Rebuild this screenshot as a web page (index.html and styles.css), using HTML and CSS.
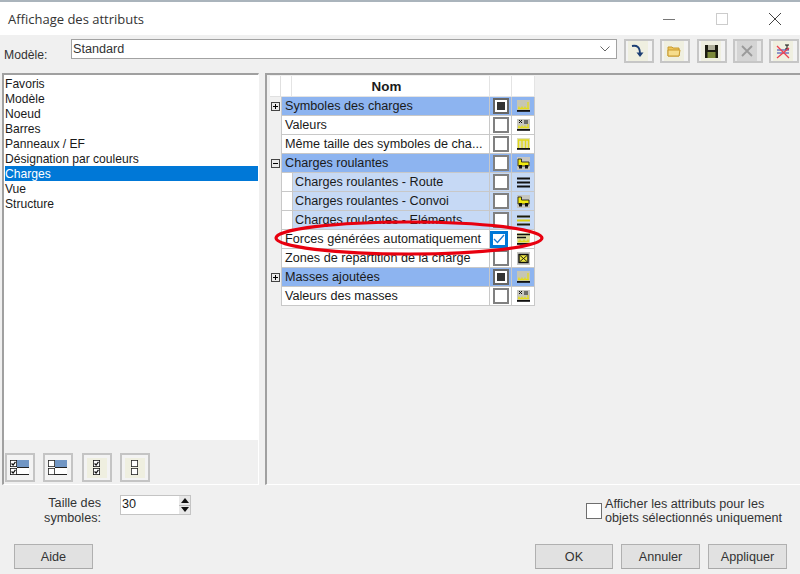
FILE: index.html
```html
<!DOCTYPE html>
<html lang="fr">
<head>
<meta charset="utf-8">
<title>Affichage des attributs</title>
<link rel="stylesheet" href="styles.css">
</head>
<body>
<svg class="defs" width="0" height="0" aria-hidden="true">
  <symbol id="i-load" viewBox="0 0 13 13"><rect width="13" height="11" fill="#c6c6b4"/><path d="M1 8.500h11M2 8.500V6.500M5 8.500V6.500M8 8.500V6.500M11 8.500V2" stroke="#e4dc1c" stroke-width="1.300" fill="none"/><rect x="0" y="10" width="13" height="1.800" fill="#111"/></symbol>
  <symbol id="i-val" viewBox="0 0 13 13"><rect width="13" height="11" fill="#c6c6c0"/><path d="M2 1l3 3M5 1L2 4M7 2h4M7 4h4" stroke="#111" stroke-width="1" fill="none"/><path d="M1 8.500h11M2 8.500V6.500M5 8.500V6.500M8 8.500V6.500M11 8.500V5" stroke="#e4dc1c" stroke-width="1.300" fill="none"/><rect x="0" y="10" width="13" height="1.800" fill="#111"/></symbol>
  <symbol id="i-same" viewBox="0 0 13 13"><rect width="13" height="11" fill="#e0e0b8"/><path d="M1.500 10V2h10v8M5 2v8M8.500 2v8" stroke="#e0d81a" stroke-width="1.300" fill="none"/><rect x="0" y="10" width="13" height="1.800" fill="#111"/></symbol>
  <symbol id="i-truck" viewBox="0 0 13 13"><rect width="13" height="13" fill="#c6c6c0"/><path d="M1 2h3.500v3H12v4H1z" fill="#f1ea10" stroke="#111" stroke-width=".8"/><rect x="2" y="8" width="3" height="3.500" fill="#111"/><rect x="8" y="8" width="3" height="3.500" fill="#111"/></symbol>
  <symbol id="i-lines" viewBox="0 0 13 13"><path d="M0 2.500h13M0 6.500h13M0 10.500h13" stroke="#111" stroke-width="1.800"/></symbol>
  <symbol id="i-lines-y" viewBox="0 0 13 13"><path d="M0 2.500h13M0 10.500h13" stroke="#1c1c08" stroke-width="1.800"/><path d="M0 6.500h13" stroke="#d8cf10" stroke-width="2"/></symbol>
  <symbol id="i-forces" viewBox="0 0 13 13"><rect width="13" height="11" fill="#dcdca0"/><path d="M0 1.500h13M0 4.500h9" stroke="#111" stroke-width="1.300"/><path d="M1 8.500h11M3 8.500V6.500M7 8.500V6.500M11 8.500V6.500" stroke="#e0d81a" stroke-width="1.300" fill="none"/><rect x="0" y="10" width="13" height="1.800" fill="#111"/></symbol>
  <symbol id="i-zone" viewBox="0 0 13 13"><rect width="13" height="13" fill="#c6c6c0"/><rect x="2" y="2.500" width="9" height="8" fill="#eee642" stroke="#111" stroke-width="1.400"/><path d="M3 3.500l7 6M10 3.500l-7 6" stroke="#111" stroke-width=".9"/></symbol>
  <symbol id="c-on" viewBox="0 0 9 9"><rect x=".5" y=".5" width="8" height="8" fill="#fff" stroke="#111"/><path d="M2 4.500l2 2 3-4" stroke="#111" stroke-width="1.600" fill="none"/></symbol>
  <symbol id="c-off" viewBox="0 0 9 9"><rect x=".5" y=".5" width="8" height="8" fill="#fff" stroke="#222"/></symbol>
</svg>

<div class="dialog">
  <div class="top-strip"></div>
  <header class="titlebar">
    <span class="title">Affichage des attributs</span>
    <div class="win-controls">
      <svg class="win-btn" width="12" height="12" viewBox="0 0 12 12"><path d="M0 6.500h12" stroke="#777" stroke-width="1"/></svg>
      <svg class="win-btn" width="12" height="12" viewBox="0 0 12 12"><rect x=".5" y=".5" width="11" height="11" fill="#fff" stroke="#ccc"/></svg>
      <svg class="win-btn" width="12" height="12" viewBox="0 0 12 12"><path d="M0 0l12 12M12 0L0 12" stroke="#444" stroke-width="1"/></svg>
    </div>
  </header>

  <div class="model-row">
    <label class="model-label">Modèle:</label>
    <div class="combo">
      <span>Standard</span>
      <svg width="10" height="6" viewBox="0 0 10 6"><path d="M.5.500L5 5 9.500.500" stroke="#666" fill="none"/></svg>
    </div>
    <div class="tools">
      <button class="tool"><span class="tool-face"><svg width="14" height="14" viewBox="0 0 14 14"><path d="M1 2c5-1 8 1 8 8" stroke="#1d3f74" stroke-width="1.800" fill="none"/><path d="M5.500 8.500h7L9 13z" fill="#1d3f74"/></svg></span></button>
      <button class="tool"><span class="tool-face"><svg width="14" height="12" viewBox="0 0 14 12"><path d="M1 2h4l1 1h6v8H1z" fill="#eec65a" stroke="#c99a2c"/><path d="M1 5h12l-1 6H1z" fill="#f6dd8c" stroke="#c99a2c"/></svg></span></button>
      <button class="tool"><span class="tool-face"><svg width="13" height="13" viewBox="0 0 13 13"><rect width="13" height="13" fill="#1c1c10"/><rect x="3" y="0" width="7" height="5" fill="#b0b09a"/><rect x="2.500" y="7" width="8" height="6" fill="#7d8a3a"/></svg></span></button>
      <button class="tool tool-off"><span class="tool-face"><svg width="12" height="12" viewBox="0 0 12 12"><path d="M1 1l10 10M11 1L1 11" stroke="#9a9a9a" stroke-width="1.800"/></svg></span></button>
      <button class="tool"><span class="tool-face"><svg width="15" height="15" viewBox="0 0 15 15"><path d="M9 1h4M11 1v4M9 5h4" stroke="#111" fill="none"/><path d="M1 6h12M1 9h12" stroke="#2c3fb0"/><path d="M1 2l12 12M1 14L13 4" stroke="#ee4050" stroke-width="1.300"/></svg></span></button>
    </div>
  </div>

  <main class="panels">
    <section class="left-panel">
      <ul class="list">
        <li>Favoris</li>
        <li>Modèle</li>
        <li>Noeud</li>
        <li>Barres</li>
        <li>Panneaux / EF</li>
        <li>Désignation par couleurs</li>
        <li class="selected">Charges</li>
        <li>Vue</li>
        <li>Structure</li>
      </ul>
      <div class="list-tools">
        <button class="mini"><svg width="20" height="15" viewBox="0 0 20 15"><use href="#c-on" width="7" height="7" x="0" y="0"/><use href="#c-on" width="7" height="7" x="0" y="8"/><rect x="7" y="0" width="12" height="7" fill="#7196c4"/><rect x="7" y="8" width="12" height="6" fill="#fff"/><path d="M7 7.500h12M7 14.500h12" stroke="#222"/></svg></button>
        <button class="mini"><svg width="20" height="15" viewBox="0 0 20 15"><use href="#c-off" width="7" height="7" x="0" y="0"/><use href="#c-off" width="7" height="7" x="0" y="8"/><rect x="7" y="0" width="12" height="7" fill="#7196c4"/><rect x="7" y="8" width="12" height="6" fill="#fff"/><path d="M7 7.500h12M7 14.500h12" stroke="#222"/></svg></button>
        <button class="mini mini-cream"><svg width="8" height="16" viewBox="0 0 8 16"><use href="#c-on" width="7" height="7" x="0" y="0"/><use href="#c-on" width="7" height="7" x="0" y="8"/></svg></button>
        <button class="mini mini-cream"><svg width="8" height="16" viewBox="0 0 8 16"><use href="#c-off" width="7" height="7" x="0" y="0"/><use href="#c-off" width="7" height="7" x="0" y="8"/></svg></button>
      </div>
    </section>

    <section class="right-panel">
      <div class="tree">
        <div class="row head"><div class="exp"></div><div class="cell name">Nom</div><div class="cell chk"></div><div class="cell ico"></div></div>

        <div class="row group"><div class="exp"><span class="pm plus"></span></div><div class="cell name">Symboles des charges</div><div class="cell chk"><span class="box mixed"></span></div><div class="cell ico"><svg width="13" height="13"><use href="#i-load"/></svg></div></div>
        <div class="row"><div class="exp"></div><div class="cell name">Valeurs</div><div class="cell chk"><span class="box"></span></div><div class="cell ico"><svg width="13" height="13"><use href="#i-val"/></svg></div></div>
        <div class="row"><div class="exp"></div><div class="cell name">Même taille des symboles de cha...</div><div class="cell chk"><span class="box"></span></div><div class="cell ico"><svg width="13" height="13"><use href="#i-same"/></svg></div></div>
        <div class="row group"><div class="exp"><span class="pm"></span></div><div class="cell name">Charges roulantes</div><div class="cell chk"><span class="box"></span></div><div class="cell ico"><svg width="13" height="13"><use href="#i-truck"/></svg></div></div>
        <div class="row sub"><div class="exp"></div><div class="cell name">Charges roulantes - Route</div><div class="cell chk"><span class="box"></span></div><div class="cell ico"><svg width="13" height="13"><use href="#i-lines"/></svg></div></div>
        <div class="row sub"><div class="exp"></div><div class="cell name">Charges roulantes - Convoi</div><div class="cell chk"><span class="box"></span></div><div class="cell ico"><svg width="13" height="13"><use href="#i-truck"/></svg></div></div>
        <div class="row sub"><div class="exp"></div><div class="cell name">Charges roulantes - Eléments</div><div class="cell chk"><span class="box"></span></div><div class="cell ico"><svg width="13" height="13"><use href="#i-lines-y"/></svg></div></div>
        <div class="row"><div class="exp"></div><div class="cell name">Forces générées automatiquement</div><div class="cell chk"><span class="box checked"><svg width="12" height="10" viewBox="0 0 12 10"><path d="M1 5l3.500 3.500L11 1" stroke="#1d78d0" stroke-width="1.300" fill="none"/></svg></span></div><div class="cell ico"><svg width="13" height="13"><use href="#i-forces"/></svg></div></div>
        <div class="row"><div class="exp"></div><div class="cell name">Zones de répartition de la charge</div><div class="cell chk"><span class="box"></span></div><div class="cell ico"><svg width="13" height="13"><use href="#i-zone"/></svg></div></div>
        <div class="row group"><div class="exp"><span class="pm plus"></span></div><div class="cell name">Masses ajoutées</div><div class="cell chk"><span class="box mixed"></span></div><div class="cell ico"><svg width="13" height="13"><use href="#i-load"/></svg></div></div>
        <div class="row"><div class="exp"></div><div class="cell name">Valeurs des masses</div><div class="cell chk"><span class="box"></span></div><div class="cell ico"><svg width="13" height="13"><use href="#i-val"/></svg></div></div>
      </div>
      <svg class="highlight" width="280" height="44" viewBox="0 0 280 44"><ellipse cx="139" cy="22" rx="133" ry="16" fill="none" stroke="#e8000f" stroke-width="3.200"/></svg>
    </section>
  </main>

  <div class="options">
    <div class="size-label">Taille des<br>symboles:</div>
    <div class="spinner">
      <span class="spin-value">30</span>
      <span class="spin-btns">
        <span class="spin-btn"><svg width="8" height="5" viewBox="0 0 8 5"><path d="M0 5h8L4 0z" fill="#111"/></svg></span>
        <span class="spin-btn"><svg width="8" height="5" viewBox="0 0 8 5"><path d="M0 0h8L4 5z" fill="#111"/></svg></span>
      </span>
    </div>
    <div class="selection-only">
      <span class="box plain"></span>
      <span class="selection-text">Afficher les attributs pour les<br>objets sélectionnés uniquement</span>
    </div>
  </div>

  <footer class="actions">
    <button class="btn">Aide</button>
    <div class="actions-right">
      <button class="btn">OK</button>
      <button class="btn">Annuler</button>
      <button class="btn">Appliquer</button>
    </div>
  </footer>
</div>
</body>
</html>
```

FILE: styles.css
```css
* { box-sizing: border-box; }
html, body { margin: 0; padding: 0; }
body {
  width: 800px;
  height: 574px;
  overflow: hidden;
  background: #f0f0f0;
  font-family: "Liberation Sans", Arial, sans-serif;
  font-size: 12.650px;
  color: #1a1a1a;
}
.defs { position: absolute; }
.dialog { display: flex; flex-direction: column; width: 800px; height: 574px; }
.top-strip { height: 2px; background: #aab4bc; }
.titlebar {
  height: 33px;
  background: #fff;
  display: flex;
  align-items: center;
  justify-content: space-between;
  padding-left: 8px;
}
.title { font-family: "Open Sans", sans-serif; font-size: 13px; color: #333; }
.win-controls { display: flex; gap: 41px; padding-right: 19px; align-items: center; }
.win-btn { display: block; }

.model-row { height: 38px; display: flex; align-items: flex-start; padding: 4px 0 0 4px; }
.model-label { width: 67px; padding-top: 9px; color: #333; font-size: 12.200px; }
.combo {
  width: 546px;
  height: 20px;
  background: #fff;
  border: 1px solid #a2a2a2;
  display: flex;
  align-items: center;
  justify-content: space-between;
  padding: 0 6px 1px 1px;
}
.combo span { color: #333; }
.combo svg { margin-top: 1px; }
.tools { display: flex; gap: 6px; margin-left: 7px; }
.tools .tool:nth-child(3) { margin-left: 1px; }
.tool {
  width: 30px;
  height: 24px;
  border: 2px solid #c6c6c6;
  background: #f3f3f3;
  padding: 0;
  display: flex;
}
.tool-face { width: 20px; height: 20px; margin-left: 2px; background: #efefe0; display: flex; align-items: center; justify-content: center; }
.tool-off { background: #e8e8e8; }
.tool-off .tool-face { background: #d4d4d4; }

.panels { height: 412px; display: flex; padding-left: 2px; }
.left-panel {
  width: 257px;
  border: 1px solid #fff;
  border-color: #a0a0a0 #fff #fff #a0a0a0;
  border-width: 2px 1px 1px 2px;
  display: flex;
  flex-direction: column;
}
.list { list-style: none; margin: 0; padding: 1px 0 0 1px; height: 365px; background: #fff; line-height: 17px; font-size: 12.100px; }
.list li { height: 15px; white-space: nowrap; }
.list .selected { background: #0078d7; color: #fff; line-height: 15px; padding-top: 1px; }
.list-tools { display: flex; gap: 8px; padding: 13px 0 0 1px; }
.mini {
  width: 30px;
  height: 29px;
  border: 2px solid #c4c4c4;
  background: #f3f3f3;
  padding: 0;
  display: flex;
  align-items: center;
  justify-content: center;
}
.list-tools .mini:nth-child(3) { margin-left: 1px; }
.mini-cream svg { background: #efefe0; box-sizing: content-box; padding: 2px 6px 2px 6px; }

.right-panel {
  position: relative;
  margin-left: 6px;
  width: 535px;
  border-left: 2px solid #a0a0a0;
  border-top: 2px solid #a0a0a0;
  border-bottom: 1px solid #fff;
  padding: 1px 0 0 3px;
}
.tree { width: 265px; }
.row { display: grid; grid-template-columns: 11px 209px 22px 23px; height: 19px; }
.exp { display: flex; align-items: center; justify-content: center; }
.pm {
  position: relative;
  width: 9px;
  height: 9px;
  border: 1px solid #444;
  background: #eaeaea;
}
.pm::before {
  content: "";
  position: absolute;
  left: 1px;
  top: 3px;
  width: 5px;
  height: 1px;
  background: #000;
}
.pm.plus::after {
  content: "";
  position: absolute;
  left: 3px;
  top: 1px;
  width: 1px;
  height: 5px;
  background: #000;
}
.cell {
  background: #fff;
  border-right: 1px solid #c8c8c8;
  border-bottom: 1px solid #c8c8c8;
  display: flex;
  align-items: center;
  white-space: nowrap;
  overflow: hidden;
}
.row > .name { padding-left: 3px; }
.row:not(.head) > .name { border-left: 1px solid #c8c8c8; }
.chk, .ico { justify-content: center; }
.head { height: 21px; }
.head .exp { background: #fff; border-right: 1px solid #e0e0e0; border-bottom: 1px solid #e0e0e0; }
.head .cell { border-color: #e4e4e4; }
.head .name { font-weight: bold; font-size: 13.400px; justify-content: center; box-shadow: inset 10px 0 0 #fff, inset 11px 0 0 #e4e4e4; }
.group .cell { background: #8db4f0; }
.sub .cell { background: #c6d9f5; }
.row.sub > .name { padding-left: 13px; box-shadow: inset 10px 0 0 #fff, inset 11px 0 0 #c8c8c8; }

.box {
  width: 16px;
  height: 16px;
  background: #fff;
  border: 2px solid #808080;
  display: flex;
  align-items: center;
  justify-content: center;
}
.box.mixed { border-color: #666; }
.box.mixed::after { content: ""; width: 8px; height: 8px; background: #333; }
.box.checked { width: 18px; height: 17px; border: 3px solid #0078d7; margin-left: -3px; }
.box.plain { flex: none; width: 16px; border-width: 1px; border-color: #6e6e6e; }

.highlight { position: absolute; left: 3px; top: 141px; }

.options { height: 59px; display: flex; align-items: flex-start; padding-top: 10px; }
.size-label { width: 101px; text-align: right; margin-right: 19px; line-height: 15px; color: #333; padding-top: 1px; white-space: nowrap; }
.spinner {
  width: 71px;
  height: 20px;
  background: #fff;
  border: 1px solid #c4c4c4;
  display: flex;
  justify-content: space-between;
}
.spin-value { padding-left: 1px; line-height: 17px; }
.spin-btns { display: flex; flex-direction: column; width: 11px; }
.spin-btn { flex: 1; background: #e8e8e8; border: 0 solid #bbb; display: flex; align-items: center; justify-content: center; }
.spin-btn + .spin-btn { border-top-width: 1px; }
.selection-only { margin-left: auto; width: 214px; display: flex; align-items: flex-start; gap: 3px; padding-top: 7px; }
.selection-only .box { margin-top: 1px; }
.selection-text { line-height: 14px; color: #333; margin-top: -5px; white-space: nowrap; }

.actions { display: flex; justify-content: space-between; padding: 0 13px 0 14px; }
.btn {
  width: 79px;
  height: 25px;
  border: 1px solid #b0b0b0;
  border-bottom-color: #a8a8a8;
  background: #e1e1e1;
  font: inherit;
  color: #333;
  padding: 0;
}
.actions-right .btn:first-child { width: 78px; }
.actions-right { display: flex; gap: 8px; }
```
